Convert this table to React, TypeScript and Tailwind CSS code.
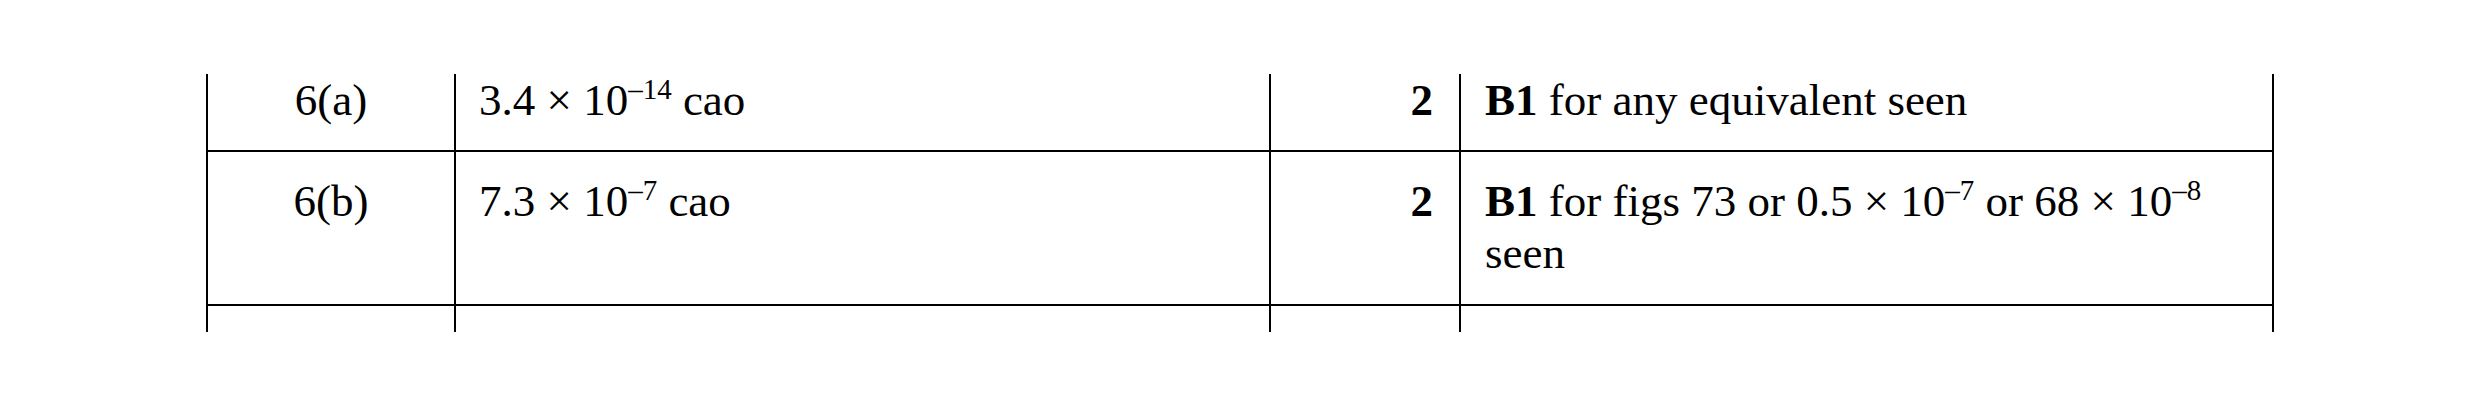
import React from 'react';

// Mark scheme rows: question, answer, marks, guidance
function Sup({ children }: { children: React.ReactNode }) {
  return <sup className="relative -top-[16px] align-baseline text-[29px] leading-none">{children}</sup>;
}

const cell = 'border-l-2 border-black';

export default function App() {
  return (
    <div
      className="w-[2481px] h-[407px] bg-white pt-[74px] pl-[206px] text-black text-[45px] leading-[52px]"
      style={{ fontFamily: '"Liberation Serif", "Times New Roman", serif' }}
    >
      <div className="grid grid-cols-[248px_815px_190px_815px]">
        {/* row 6(a) */}
        <div className={`${cell} border-b-2 pb-[24px] text-center`}>6(a)</div>
        <div className={`${cell} border-b-2 pb-[24px] pl-[23px]`}>
          3.4 × 10<Sup>–14</Sup> cao
        </div>
        <div className={`${cell} border-b-2 pb-[24px] pr-[26px] text-right font-bold`}>2</div>
        <div className={`${cell} border-r-2 border-b-2 pb-[24px] pl-[24px]`}>
          <b>B1</b> for any equivalent seen
        </div>

        {/* row 6(b) */}
        <div className={`${cell} border-b-2 pt-[23px] pb-[25px] text-center`}>6(b)</div>
        <div className={`${cell} border-b-2 pt-[23px] pb-[25px] pl-[23px]`}>
          7.3 × 10<Sup>–7</Sup> cao
        </div>
        <div className={`${cell} border-b-2 pt-[23px] pb-[25px] pr-[26px] text-right font-bold`}>2</div>
        <div className={`${cell} border-r-2 border-b-2 pt-[23px] pb-[25px] pl-[24px]`}>
          <b>B1</b> for figs 73 or 0.5 × 10<Sup>–7</Sup> or 68 × 10<Sup>–8</Sup>
          <br />
          seen
        </div>

        {/* next row, cut off */}
        <div className={`${cell} h-[26px]`} />
        <div className={`${cell} h-[26px]`} />
        <div className={`${cell} h-[26px]`} />
        <div className={`${cell} border-r-2 h-[26px]`} />
      </div>
    </div>
  );
}
